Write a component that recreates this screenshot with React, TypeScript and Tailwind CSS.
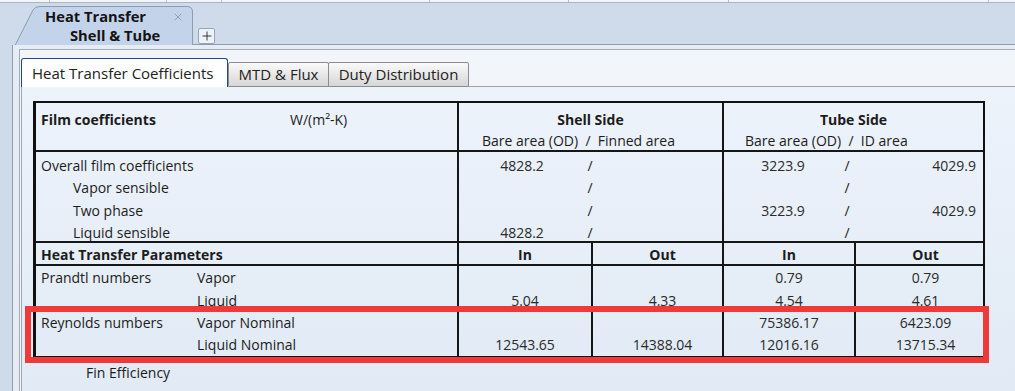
import React from "react";
import { Plus, X } from "lucide-react";

const COLS = "grid grid-cols-[423px_134px_131px_132px_127px]";
const VL = "border-r-2 border-[#161616]";
const HL = "border-b-2 border-[#161616]";

interface RowProps {
  h: string;
  line?: boolean;
  children: React.ReactNode;
}

const Row: React.FC<RowProps> = (props) => {
  return (
    <div className={`${COLS} ${props.h} ${props.line ? HL : ""}`}>
      {props.children}
    </div>
  );
};

interface FilmRowProps {
  label: string;
  indent?: boolean;
  shell?: string;
  tubeBare?: string;
  tubeId?: string;
  h: string;
  pt: string;
  line?: boolean;
}

const FilmRow: React.FC<FilmRowProps> = (props) => {
  return (
    <Row h={props.h} line={props.line}>
      <div className={`${VL} ${props.indent ? "pl-[37px]" : "pl-[5px]"} ${props.pt}`}>
        {props.label}
      </div>
      <div className={`col-span-2 ${VL} flex ${props.pt}`}>
        <span className="w-[126px] text-center text-[#2a2a2a]">{props.shell}</span>
        <span className="w-[10px] text-center">/</span>
      </div>
      <div className={`col-span-2 flex ${props.pt}`}>
        <span className="w-[118px] text-center text-[#2a2a2a]">{props.tubeBare}</span>
        <span className="w-[10px] text-center">/</span>
        <span className="flex-1 text-right pr-[7px] text-[#2a2a2a]">{props.tubeId}</span>
      </div>
    </Row>
  );
};

interface ParamRowProps {
  label?: string;
  sub: string;
  values: string[];
  pt?: string;
  line?: boolean;
}

const ParamRow: React.FC<ParamRowProps> = (props) => {
  const pt = props.pt ?? "";
  return (
    <Row h={props.line ? "h-[24px]" : "h-[22px]"} line={props.line}>
      <div className={`${VL} pl-[5px] flex ${pt}`}>
        <span className="w-[156px]">{props.label}</span>
        <span>{props.sub}</span>
      </div>
      <div className={`${VL} text-center text-[#2a2a2a] ${pt}`}>{props.values[0]}</div>
      <div className={`${VL} text-center pl-[10px] text-[#2a2a2a] ${pt}`}>{props.values[1]}</div>
      <div className={`${VL} text-center text-[#2a2a2a] ${pt}`}>{props.values[2]}</div>
      <div className={`text-center pl-[12px] text-[#2a2a2a] ${pt}`}>{props.values[3]}</div>
    </Row>
  );
};

const App: React.FC = () => {
  return (
    <div className="relative w-[1015px] h-[391px] overflow-hidden flex flex-col bg-[#cfdbeb] font-['Open_Sans','Noto_Sans',sans-serif] text-[#1c1c1c]">
      {/* strip of the grid above */}
      <div className="h-[3px] flex bg-[#f3f5f8] border-b border-[#a9b6c6]">
        <div className="w-[50px] border-r border-[#b5bfcb]" />
        <div className="w-[117px] border-r border-[#b5bfcb]" />
        <div className="w-[55px] border-r border-[#b5bfcb]" />
        <div className="w-[208px] border-r border-[#b5bfcb]" />
        <div className="w-[139px] border-r border-[#b5bfcb]" />
        <div className="w-[160px] border-r border-[#b5bfcb]" />
        <div className="w-[260px] border-r border-[#b5bfcb]" />
      </div>

      {/* document tabs */}
      <div className="h-[42px] ml-[12px] flex items-end">
        <div className="relative w-[181px] h-full">
          <svg className="absolute inset-0" width="181" height="42" viewBox="0 0 181 42">
            <path
              d="M3 42.5 L21 7 Q23 3.5 28 3.5 L175 3.5 Q180.5 3.5 180.5 9 L180.5 42.5"
              fill="#c3d3e9"
              stroke="#8c9db1"
              strokeWidth="1"
            />
          </svg>
          <div className="relative flex flex-col pt-[4px] pl-[33px] text-[14.7px] font-bold leading-[19px] text-[#141414]">
            <div className="flex items-center justify-between pr-[9px]">
              <span>Heat Transfer</span>
              <X size={12} strokeWidth={1.5} className="text-[#8a8f96]" />
            </div>
            <span className="pl-[25px]">Shell &amp; Tube</span>
          </div>
        </div>
        <div className="flex-1 self-stretch flex items-end border-b border-[#8d9cae] pl-[5px]">
          <div className="w-[17px] h-[16px] flex items-center justify-center border border-[#97a6b7] rounded-[2px] bg-[#eef3f9]">
            <Plus size={14} strokeWidth={1.5} className="text-[#202020]" />
          </div>
        </div>
      </div>

      {/* panel */}
      <div className="flex-1 ml-[12px] border-l border-[#8d9cae] bg-[#e6ecf3] pl-[6px] pt-[4px] flex flex-col">
        <div className="flex-1 border-l border-t border-[#a3adba] bg-[#f2f5f9] pt-[8px] pl-[1px] flex flex-col">
          <div className="h-[29px] flex items-end text-[15px]">
            <div className="h-full w-[207px] border border-b-0 border-[#2a4690] rounded-t-[3px] bg-white pl-[10px] leading-[28px] text-[#222]">
              Heat Transfer Coefficients
            </div>
            <div className="h-[25px] w-[101px] border border-[#8c8c8c] rounded-t-[2px] bg-linear-to-b from-[#fafafa] to-[#d6d6d6] text-center leading-[23px] text-[#222]">
              MTD &amp; Flux
            </div>
            <div className="h-[25px] w-[141px] -ml-px border border-[#8c8c8c] rounded-t-[2px] bg-linear-to-b from-[#fafafa] to-[#d6d6d6] text-center leading-[23px] text-[#222]">
              Duty Distribution
            </div>
            <div className="flex-1 border-b border-[#a2a2a2]" />
          </div>

          <div className="flex-1 border-l border-[#9ea9b6] bg-linear-to-b from-[#edf3fb] to-[#e1eaf5] pl-[11px] pt-[14px] text-[14px] leading-[22px]">
            <div className="w-[952px] border-t-2 border-l-[3px] border-r-2 border-b-2 border-[#111]">
              <Row h="h-[25px]">
                <div className={`${VL} pl-[5px] pt-[6px] flex`}>
                  <span className="w-[249px] font-bold">Film coefficients</span>
                  <span>W/(m²-K)</span>
                </div>
                <div className={`col-span-2 ${VL} pt-[6px] text-center font-bold`}>Shell Side</div>
                <div className="col-span-2 pt-[6px] text-center font-bold">Tube Side</div>
              </Row>
              <Row h="h-[24px]" line>
                <div className={VL} />
                <div className={`col-span-2 ${VL} pl-[23px] pt-[2px] whitespace-pre`}>Bare area (OD)  /  Finned area</div>
                <div className="col-span-2 pl-[21px] pt-[2px] whitespace-pre">Bare area (OD)  /  ID area</div>
              </Row>

              <FilmRow label="Overall film coefficients" shell="4828.2" tubeBare="3223.9" tubeId="4029.9" h="h-[23px]" pt="pt-[3px]" />
              <FilmRow label="Vapor sensible" indent h="h-[22px]" pt="pt-[2px]" />
              <FilmRow label="Two phase" indent tubeBare="3223.9" tubeId="4029.9" h="h-[23px]" pt="pt-[3px]" />
              <FilmRow label="Liquid sensible" indent shell="4828.2" h="h-[23px]" pt="pt-[2px]" line />

              <Row h="h-[23px]" line>
                <div className={`${VL} pl-[5px] pt-[1px] font-bold leading-[21px]`}>Heat Transfer Parameters</div>
                <div className={`${VL} text-center pt-[1px] font-bold leading-[21px]`}>In</div>
                <div className={`${VL} text-center pl-[10px] pt-[1px] font-bold leading-[21px]`}>Out</div>
                <div className={`${VL} text-center pt-[1px] font-bold leading-[21px]`}>In</div>
                <div className="text-center pl-[12px] pt-[1px] font-bold leading-[21px]">Out</div>
              </Row>

              <ParamRow label="Prandtl numbers" sub="Vapor" values={["", "", "0.79", "0.79"]} pt="pt-[1px]" />
              <ParamRow sub="Liquid" values={["5.04", "4.33", "4.54", "4.61"]} pt="pt-[2px]" line />
              <ParamRow label="Reynolds numbers" sub="Vapor Nominal" values={["", "", "75386.17", "6423.09"]} />
              <ParamRow sub="Liquid Nominal" values={["12543.65", "14388.04", "12016.16", "13715.34"]} />
            </div>
            <div className="mt-[4px] ml-[53px]">Fin Efficiency</div>
          </div>
        </div>
      </div>

      {/* highlight drawn over the Reynolds rows */}
      <div className="absolute left-[25px] top-[306px] w-[964px] h-[57px] border-[6px] border-[#f03a3a]" />
    </div>
  );
};

export default App;
